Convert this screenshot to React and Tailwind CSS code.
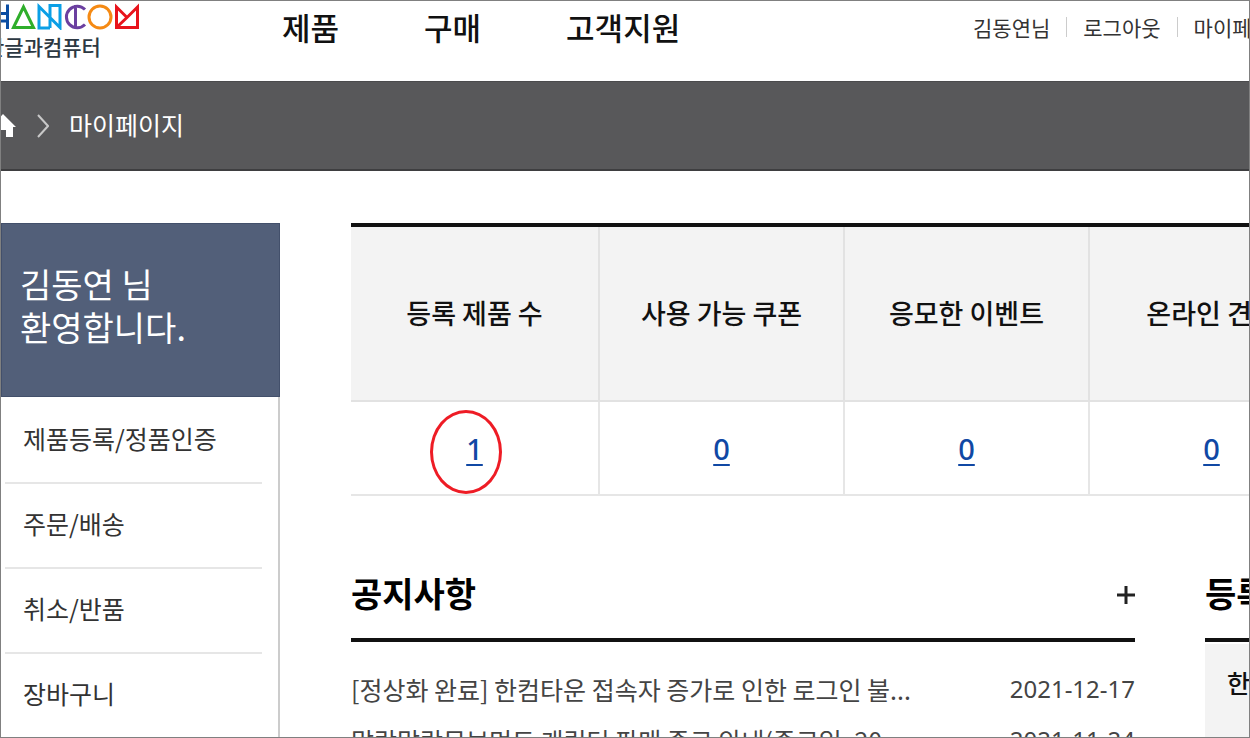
const stats = [
  { label: "등록 제품 수", count: 1, marked: true },
  { label: "사용 가능 쿠폰", count: 0 },
  { label: "응모한 이벤트", count: 0 },
  { label: "온라인 견적", count: 0 },
];

const notices = [
  { title: "[정상화 완료] 한컴타운 접속자 증가로 인한 로그인 불...", date: "2021-12-17" },
  { title: "말랑말랑무브먼트 캐릭터 판매 종료 안내(종료일: 20...", date: "2021-11-24" },
];

const sideMenus = ["제품등록/정품인증", "주문/배송", "취소/반품", "장바구니"];

function Logo() {
  return (
    <a href="#" aria-label="한글과컴퓨터" className="flex flex-col w-[140px] shrink-0">
      <svg viewBox="0 0 140 29" className="h-[29px] w-[140px]" fill="none" strokeWidth="3">
        <path d="M-8 12.500H6M-8 20H6M6.500 3.500V28" stroke="#0b4da2" />
        <path d="M12.500 26.500L22.500 6L32.500 26.500Z" stroke="#2fae2b" />
        <path d="M49 27H38V5.500L59 26.500V4.500H49V27" stroke="#0a9fe6" />
        <path d="M84 8.500A10.800 10.800 0 1 0 84 23.500M74.500 4V28" stroke="#6b3fa0" />
        <circle cx="99" cy="16" r="11" stroke="#f58a14" />
        <path d="M115.500 26.500V6L126 16.500L136.500 6V26.500ZM116 26L126 16.500" stroke="#e8131b" />
      </svg>
      <span className="-ml-4 text-[21px] leading-8 font-medium text-[#2c3842] whitespace-nowrap">한글과컴퓨터</span>
    </a>
  );
}

function Header() {
  return (
    <header className="flex h-20 items-start whitespace-nowrap">
      <Logo />
      <nav className="ml-[141px] flex gap-[85px] pt-1.5 text-[31px] leading-10 font-medium text-[#111]">
        <a href="#">제품</a>
        <a href="#">구매</a>
        <a href="#">고객지원</a>
      </nav>
      <div className="ml-auto flex w-[276px] shrink-0 items-center gap-4 pt-2 text-[21px] leading-9 text-[#333]">
        <a href="#">김동연님</a>
        <span className="h-5 w-px shrink-0 bg-[#ccc]" />
        <a href="#">로그아웃</a>
        <span className="h-5 w-px shrink-0 bg-[#ccc]" />
        <a href="#">마이페이지</a>
      </div>
    </header>
  );
}

function Breadcrumb() {
  return (
    <div className="flex h-[90px] items-center border-t border-b-2 border-t-[#4b4b4d] border-b-[#3e3e40] bg-[#58585a] text-white">
      <a href="#" aria-label="홈">
        <svg viewBox="0 0 15 24" className="h-6 w-[15px]" fill="#fff">
          <path d="M-10 13L2 0L15 13H12V23H5V16H0V23H-10Z" />
        </svg>
      </a>
      <svg viewBox="0 0 12 24" className="ml-[21px] h-6 w-3" fill="none" stroke="#c8c8c8" strokeWidth="2">
        <path d="M1 1L11 12L1 23" />
      </svg>
      <span className="ml-5 pb-1 text-[25px] leading-9">마이페이지</span>
    </div>
  );
}

function Sidebar() {
  return (
    <aside className="w-[279px] shrink-0">
      <div className="h-[174px] border border-[#43506b] bg-[#525f79] px-[18px] pt-[38px] text-[34px] leading-[43px] text-white">
        <p>김동연 님</p>
        <p>환영합니다.</p>
      </div>
      <ul className="h-full border-r-2 border-[#ccc] pt-0.5 pr-4 pl-1">
        {sideMenus.map((menu) => (
          <li key={menu} className="flex h-[85px] items-center border-b-2 border-[#e6e6e6] pb-1.5 pl-[18px] text-[25px] leading-9 text-[#333]">
            <a href="#">{menu}</a>
          </li>
        ))}
      </ul>
    </aside>
  );
}

function StatTable() {
  return (
    <table className="w-[984px] table-fixed border-t-4 border-[#111] text-center">
      <thead>
        <tr>
          {stats.map(({ label }) => (
            <th key={label} className="h-44 border-r-2 border-b-2 border-[#e2e2e2] bg-[#f3f3f3] text-[27px] font-medium whitespace-nowrap text-[#111] first:w-[248px]">
              {label}
            </th>
          ))}
        </tr>
      </thead>
      <tbody>
        <tr>
          {stats.map(({ label, count, marked }) => (
            <td key={label} className="h-[94px] border-r-2 border-b-2 border-[#e6e6e6] text-[29px] font-medium text-[#1048a4]">
              <span className="relative inline-block">
                <a href="#" className="font-['Noto_Sans','Noto_Sans_CJK_KR',sans-serif] underline underline-offset-4">{count}</a>
                {/* 등록 제품 수 강조 표시 */}
                {marked && (
                  <span className="absolute -top-4 -left-9 h-[84px] w-[72px] rounded-[50%] border-3 border-[#ee1c25]" />
                )}
              </span>
            </td>
          ))}
        </tr>
      </tbody>
    </table>
  );
}

function Notices() {
  return (
    <section className="w-[784px] shrink-0">
      <div className="flex h-[78px] items-center justify-between border-b-4 border-[#111] pb-3">
        <h2 className="pb-1 text-[34px] leading-[50px] font-bold text-black">공지사항</h2>
        <button type="button" aria-label="공지사항 더보기">
          <svg viewBox="0 0 18 18" className="size-[18px]" stroke="#222" strokeWidth="3">
            <path d="M9 0V18M0 9H18" />
          </svg>
        </button>
      </div>
      <ul className="pt-[21px]">
        {notices.map(({ title, date }) => (
          <li key={date} className="flex h-[51px] items-center justify-between leading-9 text-[#444]">
            <a href="#" className="text-[25px]">{title}</a>
            <time className="font-['Noto_Sans','Noto_Sans_CJK_KR',sans-serif] text-[24px]">{date}</time>
          </li>
        ))}
      </ul>
    </section>
  );
}

function Products() {
  return (
    <section className="w-[784px] shrink-0">
      <div className="flex h-[78px] items-center border-b-4 border-[#111] pb-3">
        <h2 className="pb-1 text-[34px] leading-[50px] font-bold text-black">등록제품</h2>
      </div>
      <div className="mt-0.5 h-[200px] bg-[#f3f3f3] px-[22px] pt-5 text-[25px] leading-9 font-medium text-[#111]">한글</div>
    </section>
  );
}

export default function App() {
  return (
    <div className="h-screen overflow-hidden border border-[#808080] bg-white font-['Noto_Sans_CJK_KR',sans-serif]">
      <Header />
      <Breadcrumb />
      <div className="flex gap-[71px] pt-[52px]">
        <Sidebar />
        <main className="min-w-0 flex-1 overflow-hidden">
          <StatTable />
          <div className="mt-[68px] flex gap-[70px]">
            <Notices />
            <Products />
          </div>
        </main>
      </div>
    </div>
  );
}
